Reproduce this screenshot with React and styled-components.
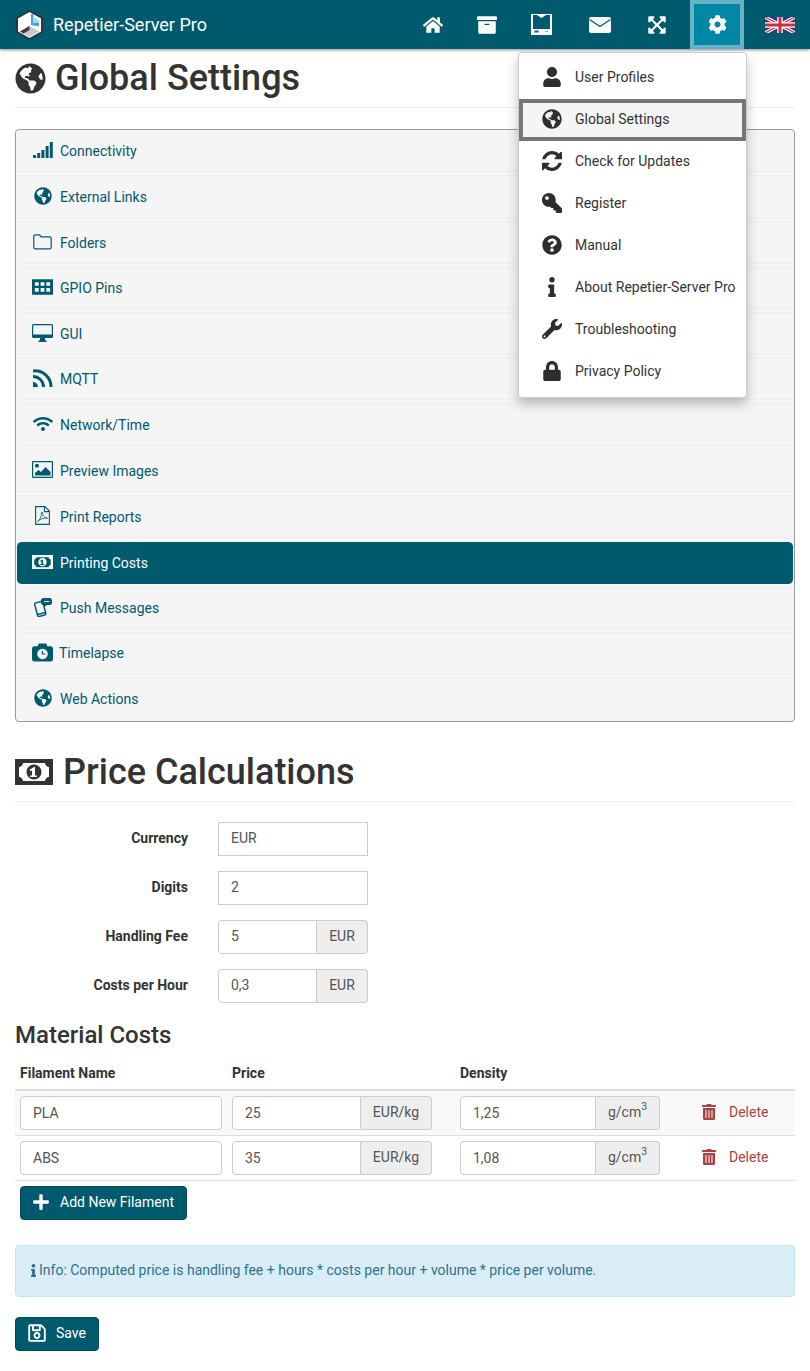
import React from 'react';
import styled, { createGlobalStyle } from 'styled-components';
import {
  FaHome, FaArchive, FaExpandArrowsAlt, FaCog, FaUser, FaGlobeAmericas, FaKey,
  FaQuestionCircle, FaInfo, FaWrench, FaLock, FaWifi, FaTrashAlt, FaPlus, FaRegSave,
} from 'react-icons/fa';

const GlobalStyle = createGlobalStyle`
  * { box-sizing: border-box; }
  body {
    margin: 0;
    background: #fff;
    color: #333;
    font-family: Roboto, "Liberation Sans", sans-serif;
    font-size: 14px;
    line-height: 20px;
  }
`;

const teal = '#005a6e';

const Navbar = styled.nav`
  position: relative;
  display: flex;
  align-items: stretch;
  height: 49px;
  background: ${teal};
  box-shadow: 0 1px 3px rgba(0, 0, 0, .45);
`;
const Brand = styled.div`
  display: flex;
  align-items: center;
  gap: 10px;
  padding-left: 16px;
  color: #fff;
  font-size: 18px;
`;
const NavItems = styled.div`
  display: flex;
  margin-left: auto;
`;
const NavItem = styled.div`
  display: flex;
  align-items: center;
  justify-content: center;
  width: ${p => p.$w || 54}px;
  margin-left: ${p => (p.$active ? 7 : 0)}px;
  color: #fff;
  font-size: 20px;
  background: ${p => (p.$active ? '#0087a5' : 'transparent')};
  border: ${p => (p.$active ? '4px solid #66b3c6' : 'none')};
`;
const FlagItem = styled.div`
  display: flex;
  align-items: center;
  padding: 0 15px 0 21px;
`;

const Dropdown = styled.div`
  position: absolute;
  z-index: 5;
  top: 52px;
  right: 63px;
  width: 229px;
  padding: 4px 0;
  background: #fff;
  border: 1px solid rgba(0, 0, 0, .2);
  border-radius: 4px;
  box-shadow: 0 6px 12px rgba(0, 0, 0, .25);
`;
const DropItem = styled.div`
  display: flex;
  align-items: center;
  height: 42px;
  padding-left: ${p => (p.$active ? 18 : 22)}px;
  padding-bottom: 2px;
  background: ${p => (p.$active ? '#f5f5f5' : 'transparent')};
  border: ${p => (p.$active ? '4px solid #777' : 'none')};
  white-space: nowrap;
`;
const DropIcon = styled.span`
  display: flex;
  justify-content: center;
  width: 22px;
  margin-right: 12px;
  font-size: 20px;
  color: #2e2e2e;
  transform: ${p => (p.$flip ? 'scaleX(-1)' : 'none')};
`;

const Main = styled.main`
  padding: 0 15px 20px;
`;
const PageHeading = styled.h1`
  display: flex;
  align-items: center;
  gap: ${p => p.$gap || 9}px;
  height: 59px;
  margin: ${p => p.$top || 0}px 0 ${p => p.$bottom || 20}px;
  border-bottom: 1px solid #eee;
  font-size: 36px;
  line-height: 40px;
  font-weight: 500;
  color: #333;
`;
const Panel = styled.div`
  background: #f5f5f5;
  border: 1px solid #999;
  border-radius: 4px;
`;
const SettingRow = styled.div`
  display: flex;
  align-items: center;
  height: ${p => p.$h}px;
  margin: 0 1px ${p => (p.$last ? 0 : p.$active ? 2 : 3)}px;
  padding-left: 15px;
  color: ${p => (p.$active ? '#fff' : teal)};
  background: ${p => (p.$active ? teal : 'transparent')};
  background-clip: padding-box;
  border-style: solid;
  border-width: 1px 0;
  border-color: ${p => (p.$active ? 'transparent' : '#eee')};
  border-top-color: ${p => (p.$first || p.$active ? 'transparent' : '#eee')};
  border-bottom-color: ${p => (p.$last || p.$active ? 'transparent' : '#eee')};
  border-radius: ${p => (p.$active ? '5px' : '0')};
`;
const RowIcon = styled.span`
  display: flex;
  justify-content: center;
  width: 21px;
  margin-right: ${p => (p.$tight ? 6 : 7)}px;
  font-size: 18px;
  position: relative;
  top: -1px;
`;

const FormRow = styled.div`
  display: flex;
  align-items: center;
  height: 34px;
  margin-bottom: 15px;
  input { padding-top: 5px; padding-bottom: 7px; }
`;
const FormLabel = styled.label`
  width: 173px;
  margin-right: 30px;
  padding-bottom: 2px;
  text-align: right;
  font-weight: 700;
`;
const PlainInput = styled.input`
  width: ${p => p.$w || 150}px;
  height: 34px;
  padding: 6px 12px;
  border: 1px solid #ccc;
  border-radius: ${p => (p.$round ? '4px' : '0')};
  background: #fff;
  color: #555;
  font: inherit;
  outline: none;
`;
const InputGroup = styled.div`
  display: flex;
  width: ${p => p.$w}px;
  height: 34px;
`;
const GroupInput = styled.input`
  flex: 1;
  min-width: 0;
  padding: 6px 12px;
  border: 1px solid #ccc;
  border-radius: 4px 0 0 4px;
  background: #fff;
  color: #555;
  font: inherit;
  outline: none;
`;
const Addon = styled.span`
  display: flex;
  align-items: center;
  justify-content: center;
  width: ${p => p.$w}px;
  padding-bottom: 2px;
  border: 1px solid #ccc;
  border-left: 0;
  border-radius: 0 4px 4px 0;
  background: #eee;
  color: #555;
  sup { font-size: 10.5px; line-height: 0; position: relative; top: -1px; vertical-align: super; }
`;

const SubHeading = styled.h2`
  margin: 19px 0 0;
  font-size: 24px;
  line-height: 26px;
  font-weight: 500;
`;
const TableRow = styled.div`
  display: grid;
  grid-template-columns: 212px 228px 232px 1fr;
  align-items: center;
  padding: ${p => (p.$head ? '15px 0 6px' : '0')};
  height: ${p => (p.$head ? 43 : 45)}px;
  background: ${p => (p.$striped ? '#f9f9f9' : 'transparent')};
  border-bottom: ${p => (p.$head ? '2px' : '1px')} solid #ddd;
`;
const HeadCell = styled.div`
  padding-left: 5px;
  font-weight: 700;
`;
const Cell = styled.div`
  padding-left: 5px;
`;
const DeleteAction = styled.div`
  display: flex;
  align-items: center;
  gap: 12px;
  padding: 0 0 2px 14px;
  color: #a94442;
  svg { font-size: 16px; }
`;
const PrimaryButton = styled.button`
  display: inline-flex;
  align-items: center;
  height: 34px;
  padding: 0 12px 2px ${p => p.$pad}px;
  gap: ${p => p.$gap}px;
  color: #fff;
  background: ${teal};
  border: 1px solid #004a5b;
  border-radius: 4px;
  font: inherit;
  svg { font-size: ${p => p.$icon}px; }
`;
const AddRow = styled.div`
  margin: 5px 0 0 5px;
`;
const InfoAlert = styled.div`
  display: flex;
  align-items: center;
  height: 52px;
  margin: 25px 0 20px;
  padding: 0 15px 2px;
  color: #31708f;
  background: #d9edf7;
  border: 1px solid #bce8f1;
  border-radius: 4px;
  svg { font-size: 13px; margin: 0 -1px 0 -4px; }
`;

const Logo = () => (
  <svg width="27" height="30" viewBox="0 0 27 30">
    <path d="M13.5 1 26 8v14l-12.500 7L1 22V8z" fill="#fff" stroke="#2b3640" strokeWidth="2" />
    <path d="M4 21.500 13.500 16l9.500 5.500-9.500 5.500z" fill="#c9c9c9" />
    <path d="M4 21.500 13.500 16V20L7.500 23.500z" fill="#3a3f45" />
    <path d="M15 4h2.500v9H23v3.500l-8-1.500z" fill="#45a5e0" />
    <path d="M17.500 7 23 10v3h-5.500z" fill="#a8d8f2" />
  </svg>
);

const BookIcon = () => (
  <svg width="21" height="21" viewBox="0 0 21 21">
    <path d="M0 0h21v21H0zM2 1v14h17V1h-4l-4.500 3L6 1z" fill="#fff" fillRule="evenodd" />
    <rect x="3.500" y="16.500" width="4" height="2" fill="#1b5a86" />
    <rect x="14" y="17" width="3" height="1" fill="#9ab" />
  </svg>
);

const EnvelopeIcon = () => (
  <svg width="22" height="16" viewBox="0 0 22 16">
    <rect width="22" height="16" rx="2" fill="#fff" />
    <path d="M0.500 2.500 11 9.500l10.500-7" fill="none" stroke={teal} strokeWidth="1.300" />
  </svg>
);

const UkFlag = () => (
  <svg width="30" height="16" viewBox="0 0 60 32">
    <rect width="60" height="32" fill="#2b3a7a" />
    <path d="M0 0 60 32M60 0 0 32" stroke="#fff" strokeWidth="7" />
    <path d="M0 0 60 32M60 0 0 32" stroke="#c8313e" strokeWidth="2.500" />
    <path d="M30 0v32M0 16h60" stroke="#fff" strokeWidth="11" />
    <path d="M30 0v32M0 16h60" stroke="#c8313e" strokeWidth="6" />
  </svg>
);

const RefreshIcon = () => (
  <svg width="20" height="20" viewBox="0 0 1536 1536" fill="currentColor">
    <path d="M1511 928q0 5-1 7-64 268-268 434.500t-478 166.500q-146 0-282.500-55t-243.500-157l-129 129q-19 19-45 19t-45-19-19-45v-448q0-26 19-45t45-19h448q26 0 45 19t19 45-19 45l-137 137q71 66 161 102t187 36q134 0 250-65t186-179q11-17 53-117 8-23 30-23h192q13 0 22.500 9.500t9.500 22.500zm25-800v448q0 26-19 45t-45 19h-448q-26 0-45-19t-19-45 19-45l138-138q-148-137-349-137-134 0-250 65t-186 179q-11 17-53 117-8 23-30 23h-199q-13 0-22.500-9.500t-9.500-22.500v-7q65-268 270-434.500t480-166.500q146 0 284 55.500t245 156.500l130-129q19-19 45-19t45 19 19 45z" />
  </svg>
);

const SignalIcon = () => (
  <svg width="20" height="16" viewBox="0 0 20 16" fill="currentColor">
    <rect x="0" y="13" width="3" height="3" />
    <rect x="4.200" y="11" width="3" height="5" />
    <rect x="8.400" y="8" width="3" height="8" />
    <rect x="12.600" y="4" width="3" height="12" />
    <rect x="16.800" y="0" width="3" height="16" />
  </svg>
);

const FolderIcon = () => (
  <svg width="19" height="16" viewBox="0 0 19 16">
    <path
      d="M2.500.8h3.700c1 0 1.300 2 2.300 2h8a1.700 1.700 0 0 1 1.700 1.700v8.700a1.700 1.700 0 0 1-1.700 1.700H2.500A1.700 1.700 0 0 1 .8 13.200V2.500A1.700 1.700 0 0 1 2.500.8z"
      fill="none"
      stroke="currentColor"
      strokeWidth="1.200"
    />
  </svg>
);

const PinsIcon = () => (
  <svg width="22" height="16" viewBox="0 0 22 16">
    <path
      fill="currentColor"
      fillRule="evenodd"
      d="M0 0h22v16H0zM3 3v3.600h4V3zm6 0v3.600h4V3zm6 0v3.600h4V3zM3 9v4h4V9zm6 0v4h4V9zm6 0v4h4V9z"
    />
  </svg>
);

const MonitorIcon = () => (
  <svg width="21" height="18" viewBox="0 0 21 18">
    <path
      fill="currentColor"
      fillRule="evenodd"
      d="M1.500 0h18A1.500 1.500 0 0 1 21 1.500v11a1.500 1.500 0 0 1-1.500 1.500H13v2l1.500 1v1h-8v-1L8 16v-2H1.500A1.500 1.500 0 0 1 0 12.500v-11A1.500 1.500 0 0 1 1.500 0zM1.200 1.200v9.300h18.600V1.200z"
    />
  </svg>
);

const FeedIcon = () => (
  <svg width="20" height="18" viewBox="0 0 20 18">
    <path d="M0 13a5 5 0 0 1 5 5H0z" fill="currentColor" />
    <path d="M0 7.500A10.500 10.500 0 0 1 10.500 18" fill="none" stroke="currentColor" strokeWidth="2.800" />
    <path d="M0 2A16 16 0 0 1 18 18" fill="none" stroke="currentColor" strokeWidth="3" />
  </svg>
);

const PictureIcon = () => (
  <svg width="21" height="17" viewBox="0 0 21 17">
    <path fill="currentColor" fillRule="evenodd" d="M1 0h19a1 1 0 0 1 1 1v15a1 1 0 0 1-1 1H1a1 1 0 0 1-1-1V1a1 1 0 0 1 1-1zM1.200 1.200v14.600h18.600V1.200z" />
    <circle cx="5" cy="4.800" r="2" fill="currentColor" />
    <path d="M3 14.500v-2.500l3.500-3 2.500 2 4.500-5 5 5v3.500z" fill="currentColor" />
  </svg>
);

const PdfIcon = () => (
  <svg width="15" height="19" viewBox="0 0 15 19">
    <path d="M.6.6h9.300l4.500 4.500v13.300H.6zM9.500.6v5h4.900" fill="none" stroke="currentColor" strokeWidth="1.100" />
    <path d="M2.500 15.500c2-1 4-5 4-8.500 0-1.500 1-1.500 1 0 0 3 2.500 5 5 5.200-3-.5-7 .5-10 3.300z" fill="none" stroke="currentColor" strokeWidth=".8" />
  </svg>
);

const MoneyIcon = ({ width }) => (
  <svg width={width} height={width * 26 / 38} viewBox="0 0 38 26">
    <path
      fill="currentColor"
      fillRule="evenodd"
      d="M0 0h38v26H0zM8 4c0 2-2 4-4 4v10c2 0 4 2 4 4h22c0-2 2-4 4-4V8c-2 0-4-2-4-4zM19 5.500a7.500 7.500 0 1 0 .01 0zM19 8l-4 2.500v1.700l2-.8v5.100h-2v1.500h7v-1.500h-2V8z"
    />
  </svg>
);

const PushIcon = () => (
  <svg width="18" height="19" viewBox="0 0 18 19">
    <g transform="rotate(-15 6 11)">
      <rect x="2" y="4" width="8.500" height="14" rx="1.500" fill="none" stroke="currentColor" strokeWidth="1.500" />
      <rect x="2.500" y="15" width="7.500" height="1.500" fill="currentColor" />
    </g>
    <path fill="currentColor" fillRule="evenodd" d="M9.500 0h6A2.500 2.500 0 0 1 18 2.500v2A2.500 2.500 0 0 1 15.500 7H13l-3 2V7a2.500 2.500 0 0 1-3-2.500v-2A2.500 2.500 0 0 1 9.500 0zM10 3v1h5.500V3z" />
  </svg>
);

const CameraIcon = () => (
  <svg width="22" height="19" viewBox="0 0 22 19">
    <path
      fill="currentColor"
      fillRule="evenodd"
      d="M2.500 3H6l1-3h8l1 3h3.500A2.500 2.500 0 0 1 22 5.500v11a2.500 2.500 0 0 1-2.500 2.500h-17A2.500 2.500 0 0 1 0 16.500v-11A2.500 2.500 0 0 1 2.500 3zM11 5.500a5.500 5.500 0 1 0 .01 0zM10.300 8v3.700H14v-1.200h-2.500V8z"
    />
  </svg>
);

const menuItems = [
  { label: 'User Profiles', icon: <FaUser /> },
  { label: 'Global Settings', icon: <FaGlobeAmericas />, active: true },
  { label: 'Check for Updates', icon: <RefreshIcon /> },
  { label: 'Register', icon: <FaKey />, flip: true },
  { label: 'Manual', icon: <FaQuestionCircle /> },
  { label: 'About Repetier-Server Pro', icon: <FaInfo /> },
  { label: 'Troubleshooting', icon: <FaWrench /> },
  { label: 'Privacy Policy', icon: <FaLock /> },
];

const settings = [
  { label: 'Connectivity', h: 42, icon: <SignalIcon /> },
  { label: 'External Links', h: 43, icon: <FaGlobeAmericas /> },
  { label: 'Folders', h: 43, icon: <FolderIcon /> },
  { label: 'GPIO Pins', h: 42, icon: <PinsIcon /> },
  { label: 'GUI', h: 43, icon: <MonitorIcon /> },
  { label: 'MQTT', h: 42, icon: <FeedIcon /> },
  { label: 'Network/Time', h: 43, icon: <FaWifi size={20} /> },
  { label: 'Preview Images', h: 43, icon: <PictureIcon /> },
  { label: 'Print Reports', h: 43, icon: <PdfIcon /> },
  { label: 'Printing Costs', h: 44, icon: <MoneyIcon width={21} />, active: true },
  { label: 'Push Messages', h: 42, icon: <PushIcon /> },
  { label: 'Timelapse', h: 42, icon: <CameraIcon />, tight: true },
  { label: 'Web Actions', h: 44, icon: <FaGlobeAmericas />, last: true },
];

const filaments = [
  { name: 'PLA', price: '25', density: '1,25', striped: true },
  { name: 'ABS', price: '35', density: '1,08' },
];

const App = () => {
  return (
    <>
      <GlobalStyle />
      <Navbar>
        <Brand><Logo />Repetier-Server Pro</Brand>
        <NavItems>
          <NavItem><FaHome /></NavItem>
          <NavItem><FaArchive /></NavItem>
          <NavItem $w={55}><BookIcon /></NavItem>
          <NavItem $w={61}><EnvelopeIcon /></NavItem>
          <NavItem $w={53}><FaExpandArrowsAlt /></NavItem>
          <NavItem $active><FaCog size={19} /></NavItem>
          <FlagItem><UkFlag /></FlagItem>
        </NavItems>
        <Dropdown>
          {menuItems.map(item => (
            <DropItem key={item.label} $active={item.active}>
              <DropIcon $flip={item.flip}>{item.icon}</DropIcon>
              {item.label}
            </DropItem>
          ))}
        </Dropdown>
      </Navbar>

      <Main>
        <PageHeading $bottom={21}><FaGlobeAmericas size={31} />Global Settings</PageHeading>
        <Panel>
          {settings.map((row, i) => (
            <SettingRow key={row.label} $h={row.h} $active={row.active} $first={i === 0} $last={row.last}>
              <RowIcon $tight={row.tight}>{row.icon}</RowIcon>
              {row.label}
            </SettingRow>
          ))}
        </Panel>

        <PageHeading $top={21} $gap={10}><MoneyIcon width={38} />Price Calculations</PageHeading>
        <FormRow>
          <FormLabel>Currency</FormLabel>
          <PlainInput readOnly value="EUR" />
        </FormRow>
        <FormRow>
          <FormLabel>Digits</FormLabel>
          <PlainInput readOnly value="2" />
        </FormRow>
        <FormRow>
          <FormLabel>Handling Fee</FormLabel>
          <InputGroup $w={150}>
            <GroupInput readOnly value="5" />
            <Addon $w={51}>EUR</Addon>
          </InputGroup>
        </FormRow>
        <FormRow>
          <FormLabel>Costs per Hour</FormLabel>
          <InputGroup $w={150}>
            <GroupInput readOnly value="0,3" />
            <Addon $w={51}>EUR</Addon>
          </InputGroup>
        </FormRow>

        <SubHeading>Material Costs</SubHeading>
        <TableRow $head>
          <HeadCell>Filament Name</HeadCell>
          <HeadCell>Price</HeadCell>
          <HeadCell>Density</HeadCell>
          <HeadCell />
        </TableRow>
        {filaments.map(f => (
          <TableRow key={f.name} $striped={f.striped}>
            <Cell><PlainInput $round $w={202} readOnly value={f.name} /></Cell>
            <Cell>
              <InputGroup $w={200}>
                <GroupInput readOnly value={f.price} />
                <Addon $w={71}>EUR/kg</Addon>
              </InputGroup>
            </Cell>
            <Cell>
              <InputGroup $w={200}>
                <GroupInput readOnly value={f.density} />
                <Addon $w={64}><span>g/cm<sup>3</sup></span></Addon>
              </InputGroup>
            </Cell>
            <DeleteAction><FaTrashAlt />Delete</DeleteAction>
          </TableRow>
        ))}
        <AddRow>
          <PrimaryButton $pad={11} $gap={10} $icon={18}><FaPlus />Add New Filament</PrimaryButton>
        </AddRow>

        <InfoAlert><FaInfo />Info: Computed price is handling fee + hours * costs per hour + volume * price per volume.</InfoAlert>

        <PrimaryButton $pad={11} $gap={9} $icon={20}><FaRegSave />Save</PrimaryButton>
      </Main>
    </>
  );
};

export default App;
